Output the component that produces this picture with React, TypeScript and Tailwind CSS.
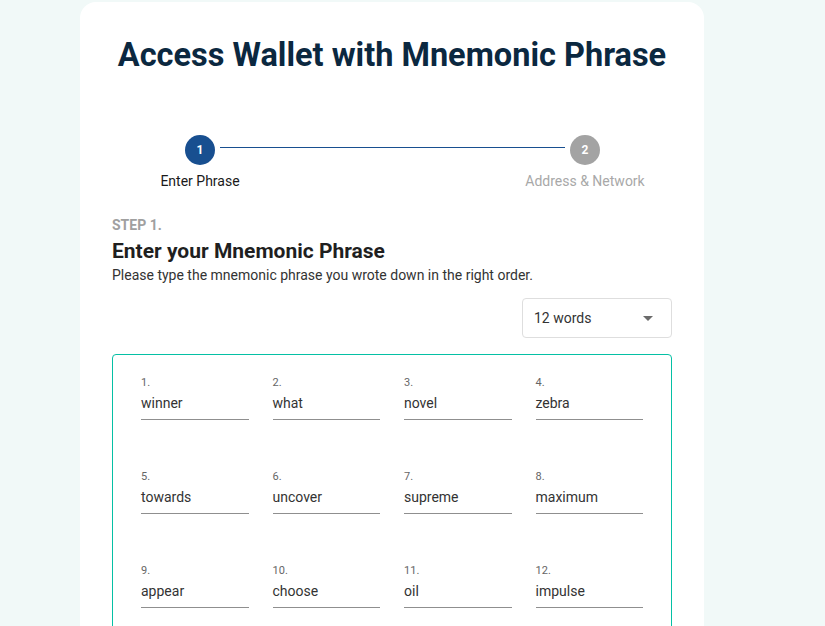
import React from "react";

const words = [
  "winner", "what", "novel", "zebra",
  "towards", "uncover", "supreme", "maximum",
  "appear", "choose", "oil", "impulse",
];

export default function App() {
  return (
    <div
      className="min-h-[626px] w-full bg-[#f1f9f8] pt-[2px]"
      style={{ fontFamily: "Roboto, 'Liberation Sans', sans-serif" }}
    >
      <div className="ml-[80px] w-[624px] min-h-[640px] rounded-[16px] bg-white px-[32px] pt-[33px]">
        <h1 className="text-center text-[32.5px] font-bold leading-[40px] text-[#0b2840]">
          Access Wallet with Mnemonic Phrase
        </h1>

        {/* Stepper */}
        <div className="mt-[60px]">
          <div className="flex items-start pl-[73px] pr-[72px]">
            <div className="flex h-[30px] w-[30px] items-center justify-center rounded-full bg-[#184f90] text-[12px] font-bold text-white">
              1
            </div>
            <div className="mx-[5px] mt-[12px] h-px flex-1 bg-[#184f90]" />
            <div className="flex h-[30px] w-[30px] items-center justify-center rounded-full bg-[#a3a3a3] text-[12px] font-bold text-white">
              2
            </div>
          </div>
          <div className="mt-[6px] flex justify-between">
            <div className="w-[176px] text-center text-[14px] leading-[20px] text-[#1a1a1a]">
              Enter Phrase
            </div>
            <div className="w-[174px] text-center text-[14px] leading-[20px] text-[#a8a8a8]">
              Address &amp; Network
            </div>
          </div>
        </div>

        <div className="mt-[24px] text-[14px] font-bold leading-[20px] text-[#a0a0a0]">STEP 1.</div>
        <div className="mt-[3px] text-[21px] font-bold leading-[27px] text-[#1f1f1f]">
          Enter your Mnemonic Phrase
        </div>
        <div className="text-[14px] leading-[20px] text-[#333333]">
          Please type the mnemonic phrase you wrote down in the right order.
        </div>

        <div className="mt-[13px] flex justify-end">
          <div className="flex h-[40px] w-[150px] items-center justify-between rounded-[4px] border border-[#dedede] pl-[11px] pr-[18px]">
            <span className="text-[14px] text-[#333333]">12 words</span>
            <span className="h-0 w-0 border-x-[5px] border-t-[5px] border-x-transparent border-t-[#6b6b6b]" />
          </div>
        </div>

        <div className="mt-[16px] rounded-[4px] border border-[#05c0a5] pb-[30px] pl-[28px] pr-[28px] pt-[21px]">
          <div className="grid grid-cols-4 gap-x-[24px] gap-y-[50px]">
            {words.map((w, i) => (
              <div key={i} className="border-b border-[#8f8f8f] pb-[6px]">
                <div className="text-[11px] leading-[14px] text-[#666666]">{i + 1}.</div>
                <div className="mt-[3px] text-[14px] leading-[20px] text-[#333333]">{w}</div>
              </div>
            ))}
          </div>
        </div>
      </div>
    </div>
  );
}
